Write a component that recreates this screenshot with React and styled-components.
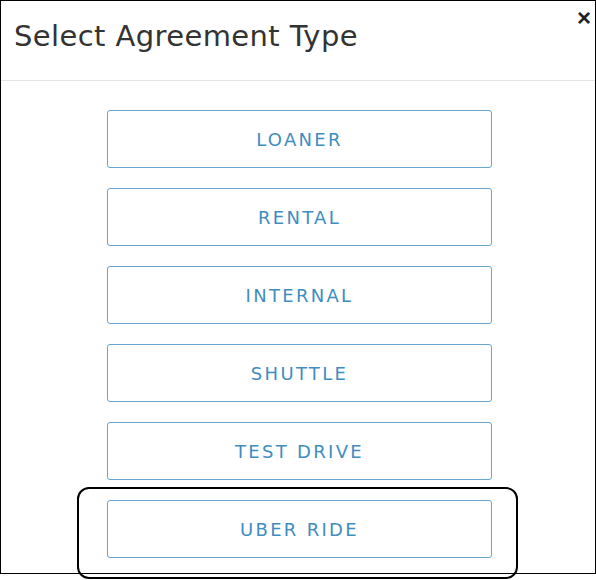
import React from 'react'
import styled, { createGlobalStyle } from 'styled-components'

const Global = createGlobalStyle`
  html, body {
    margin: 0;
    background: #fff;
  }
  body {
    font-family: "DejaVu Sans", "Open Sans", sans-serif;
  }
`

const types = ['Loaner', 'Rental', 'Internal', 'Shuttle', 'Test Drive', 'Uber Ride']

export default function App() {
  return (
    <>
      <Global />
      <Page>
        <Modal>
          <Header>
            <Title>Select Agreement Type</Title>
            <Close aria-label="Close">×</Close>
          </Header>
          <Body>
            {types.map(name => (
              <Choice key={name}>{name}</Choice>
            ))}
          </Body>
        </Modal>
        <Highlight />
      </Page>
    </>
  )
}

const Page = styled.div`
  position: relative;
  width: 596px;
  height: 580px;
`

const Modal = styled.div`
  box-sizing: border-box;
  width: 596px;
  height: 574px;
  border: 1px solid #000;
  display: flex;
  flex-direction: column;
`

const Header = styled.div`
  position: relative;
  height: 79px;
  border-bottom: 1px solid #e5e5e5;
  display: flex;
  align-items: flex-start;
  padding: 0 13px;
`

const Title = styled.h4`
  margin: 16px 0 0;
  font-size: 29px;
  font-weight: 400;
  letter-spacing: 0.4px;
  color: #333;
  line-height: 38px;
`

const Close = styled.button`
  position: absolute;
  top: 5px;
  right: 4px;
  border: 0;
  background: none;
  padding: 0;
  font-size: 24px;
  font-weight: 700;
  line-height: 24px;
  color: #222;
  cursor: pointer;
`

const Body = styled.div`
  display: flex;
  flex-direction: column;
  gap: 20px;
  padding: 29px 0 0 106px;
`

const Choice = styled.button`
  box-sizing: border-box;
  width: 385px;
  height: 58px;
  border: 1px solid #68a5cc;
  border-radius: 3px;
  background: #fff;
  color: #3f8dbf;
  font-family: inherit;
  font-size: 18px;
  letter-spacing: 2.3px;
  text-transform: uppercase;
  cursor: pointer;
`

const Highlight = styled.div`
  position: absolute;
  left: 77px;
  top: 487px;
  width: 441px;
  height: 92px;
  box-sizing: border-box;
  border: 2px solid #000;
  border-radius: 12px;
  pointer-events: none;
`
